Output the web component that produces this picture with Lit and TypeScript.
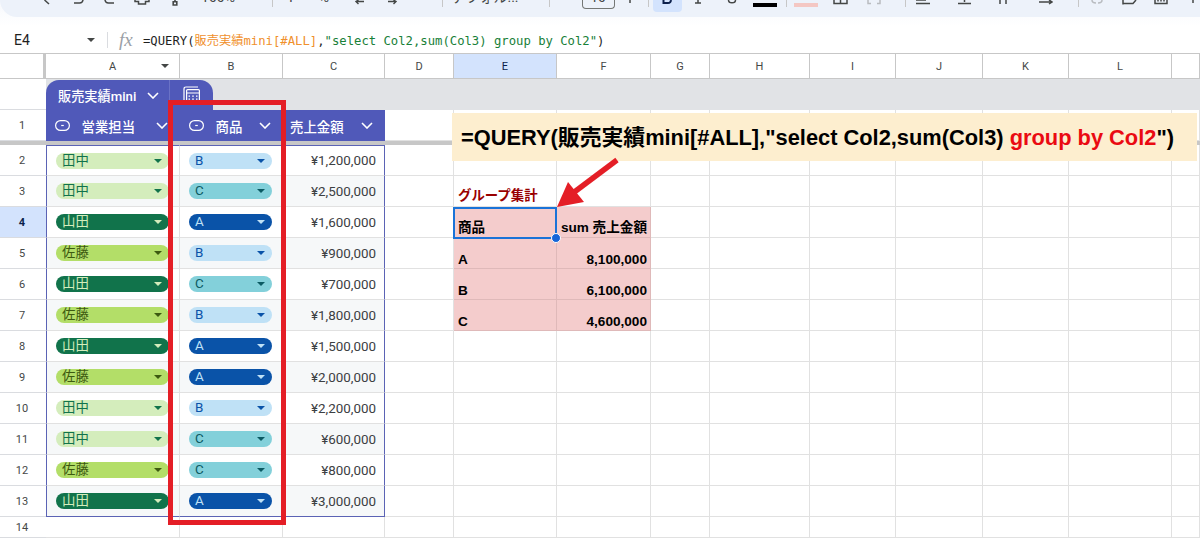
import { LitElement, html, svg, css, nothing } from 'lit';
import { customElement } from 'lit/decorators.js';

const COLS = [46, 134, 103, 102, 69, 103, 94, 59, 100, 86, 87, 86, 103, 28];
const LETTERS = ['A', 'B', 'C', 'D', 'E', 'F', 'G', 'H', 'I', 'J', 'K', 'L', ''];

const ROWS: [string, string, string][] = [
  ['田中', 'B', '¥1,200,000'],
  ['田中', 'C', '¥2,500,000'],
  ['山田', 'A', '¥1,600,000'],
  ['佐藤', 'B', '¥900,000'],
  ['山田', 'C', '¥700,000'],
  ['佐藤', 'B', '¥1,800,000'],
  ['山田', 'A', '¥1,500,000'],
  ['佐藤', 'A', '¥2,000,000'],
  ['田中', 'B', '¥2,200,000'],
  ['田中', 'C', '¥600,000'],
  ['佐藤', 'C', '¥800,000'],
  ['山田', 'A', '¥3,000,000'],
];

const PILL_CLASS: Record<string, string> = {
  田中: 'tanaka',
  山田: 'yamada',
  佐藤: 'sato',
  A: 'a',
  B: 'b',
  C: 'c',
};

// what is left of a toolbar icon below the crop line, so only the lower strokes
const tbIcon = (w: number, d: string, color = '#444746', sw = 1.5) =>
  html`<svg width=${w} height="17" viewBox="0 0 ${w} 17" fill="none" stroke=${color} stroke-width=${sw}>${svg`<path d=${d} />`}</svg>`;

const sep = html`<span class="tb-sep"></span>`;

const TOOLBAR: { c: number; w: number; t: unknown }[] = [
  { c: 47, w: 8, t: tbIcon(8, 'M1.5 0 6 4') },
  { c: 78, w: 11, t: tbIcon(11, 'M1 3H6.5A3.5 3.5 0 0 0 10 0') },
  { c: 109, w: 11, t: tbIcon(11, 'M10 3H4.5A3.5 3.5 0 0 1 1 0') },
  { c: 142, w: 16, t: tbIcon(16, 'M1 0V1.5H4.5V4H11.5V1.5H15V0') },
  { c: 175, w: 6, t: tbIcon(6, 'M3 0V1M1.2 1.8H4.8V5H1.2Z', '#444746', 1.6) },
  { c: 218, w: 40, t: html`<span class="tb-text">100%</span>` },
  { c: 272, w: 1, t: sep },
  { c: 291, w: 8, t: html`<span class="tb-text">¥</span>` },
  { c: 324, w: 12, t: html`<span class="tb-text">%</span>` },
  { c: 360, w: 10, t: tbIcon(10, 'M9 1.5H1.5M3.5 0 1 1.5 3.5 4', '#444746', 1.4) },
  { c: 392, w: 10, t: tbIcon(10, 'M1 1.5H8.5M6.5 0 9 1.5 6.5 4', '#444746', 1.4) },
  { c: 421, w: 20, t: html`<span class="tb-text small">123</span>` },
  { c: 442, w: 1, t: sep },
  { c: 485, w: 52, t: html`<span class="tb-text">デフォル...</span>` },
  { c: 549, w: 1, t: sep },
  { c: 598, w: 33, t: html`<span class="tb-box"><span class="tb-text">10</span></span>` },
  { c: 630, w: 8, t: tbIcon(8, 'M4 0V3') },
  { c: 648, w: 1, t: sep },
  { c: 667, w: 29, t: html`<span class="tb-bold">${tbIcon(12, 'M2.5 0V3H7C9 3 10 1.5 9.8 0', '#0b1f4b', 2)}</span>` },
  { c: 698, w: 8, t: tbIcon(8, 'M1 3H7M4 0V3') },
  { c: 732, w: 10, t: tbIcon(10, 'M1.5 0C1.5 3.8 8.5 3.8 8.5 0') },
  { c: 765, w: 24, t: html`<span class="tb-bar black"></span>` },
  { c: 786, w: 1, t: sep },
  { c: 806, w: 24, t: html`<span class="tb-bar pink"></span>` },
  { c: 840, w: 15, t: tbIcon(15, 'M1 0V3.6H14V0M7.5 0V3.6') },
  { c: 874, w: 14, t: tbIcon(14, 'M1 0V3.6H4M10 3.6H13V0', '#b9bcc0') },
  { c: 905, w: 1, t: sep },
  { c: 923, w: 14, t: tbIcon(14, 'M0 3.6H14M0 0H10', '#444746', 1.5) },
  { c: 964, w: 13, t: tbIcon(13, 'M0 3.6H13M6.5 0V2', '#444746', 1.5) },
  { c: 1003, w: 8, t: tbIcon(8, 'M1 0V4M7 0V4') },
  { c: 1046, w: 14, t: tbIcon(14, 'M0 2H12M10 0 13 2 10 4') },
  { c: 1078, w: 1, t: sep },
  { c: 1097, w: 12, t: tbIcon(12, 'M1 0C1 2.5 3 3 5 3M7 3C9 3 11 2.5 11 0', '#b9bcc0') },
  { c: 1129, w: 15, t: tbIcon(15, 'M1 4.5V0M1 3.4H11L14 0', '#444746') },
  { c: 1161, w: 14, t: tbIcon(14, 'M1 0V3.6H13V0M4 0V1.6M7 0V1.6M10 0V1.6') },
  { c: 1193, w: 6, t: tbIcon(6, 'M3 0V3') },
];

const chevron = html`<svg class="chev" width="12" height="7" viewBox="0 0 12 7" fill="none" stroke="#fff" stroke-width="1.6"><path d="M1 1l5 5 5-5" /></svg>`;
const pillIcon = html`<svg class="type" width="15" height="11" viewBox="0 0 15 11" fill="none" stroke="#fff" stroke-width="1.2"><rect x=".6" y=".6" width="13.8" height="9.8" rx="4.9" /><path d="M6.2 5.5h2.6" /></svg>`;
const tableIcon = html`<svg width="17" height="17" viewBox="0 0 17 17" fill="none" stroke="#fff" stroke-width="1.2"><path d="M1 16V3Q1 1 3 1H15" /><rect x="3.6" y="3.6" width="12.8" height="12.8" rx="1" /><path d="M3.6 7H16.4M5.5 10.2H7M9.2 10.2H10.8M13 10.2H14.5M5.5 13.2H7M9.2 13.2H10.8M13 13.2H14.5" /></svg>`;

@customElement('app-root')
export class AppRoot extends LitElement {
  static override styles = css`
    :host {
      display: block;
      width: 1200px;
      height: 540px;
      overflow: hidden;
      position: relative;
      background: #fff;
      font-family: Roboto, 'Noto Sans CJK JP', sans-serif;
      color: #1f1f1f;
    }

    .top {
      background: linear-gradient(#f6f8fc, #fff);
      height: 26px;
    }
    .toolbar {
      display: flex;
      height: 17px;
      overflow: hidden;
      background: #edf2fa;
      border-bottom-left-radius: 26px;
    }
    .toolbar > div {
      flex: none;
      height: 17px;
      display: flex;
      justify-content: center;
      align-items: flex-start;
    }
    .tb-sep {
      width: 1px;
      height: 7px;
      background: #c7c7c7;
    }
    .tb-text {
      font-size: 14px;
      line-height: 14px;
      margin-top: -10px;
      color: #444746;
      white-space: nowrap;
    }
    .tb-text.small {
      font-size: 11px;
      margin-top: -11px;
    }
    .tb-box {
      display: flex;
      justify-content: center;
      width: 33px;
      height: 9px;
      box-sizing: border-box;
      border: 1px solid #747775;
      border-top: 0;
      border-radius: 0 0 4px 4px;
    }
    .tb-bold {
      display: flex;
      justify-content: center;
      width: 29px;
      height: 12px;
      overflow: hidden;
      background: #d3e3fd;
      border-radius: 0 0 4px 4px;
    }
    .tb-bar {
      display: block;
      width: 24px;
      height: 4px;
      margin-top: 3px;
    }
    .tb-bar.black {
      background: #000;
    }
    .tb-bar.pink {
      background: #f4c7c3;
    }

    .formula {
      height: 28px;
      box-sizing: border-box;
      border-bottom: 1px solid #c7c7c7;
      display: flex;
      align-items: center;
    }
    .namebox {
      width: 107px;
      box-sizing: border-box;
      padding: 0 12px 0 14px;
      display: flex;
      justify-content: space-between;
      align-items: center;
      font-size: 14px;
      color: #1f1f1f;
    }
    .caret {
      width: 0;
      height: 0;
      border: 4px solid transparent;
      border-top: 4px solid #444746;
      border-bottom: 0;
    }
    .vsep {
      width: 1px;
      height: 16px;
      background: #dadce0;
    }
    .fx {
      width: 35px;
      padding-left: 11px;
      box-sizing: border-box;
      font: italic 19px 'Liberation Serif', serif;
      color: #9aa0a6;
    }
    .ftext {
      font: 12.24px 'DejaVu Sans Mono', 'Noto Sans CJK JP', monospace;
      white-space: pre;
      color: #1f1f1f;
    }
    .ftext .ref {
      color: #f0902c;
    }
    .ftext .str {
      color: #188038;
    }

    .sheet {
      display: grid;
      grid-auto-rows: 31px;
      font-size: 13.4px;
    }
    .cell {
      box-sizing: border-box;
      border-right: 1px solid #e1e1e1;
      border-bottom: 1px solid #e1e1e1;
      display: flex;
      align-items: center;
      min-width: 0;
    }
    .corner {
      border-right: 3px solid #c7c7c7;
      border-bottom: 1px solid #c7c7c7;
      background: #fff;
    }
    .colhead {
      justify-content: center;
      position: relative;
      font-size: 11px;
      color: #444746;
      border-right-color: #c7c7c7;
      border-bottom-color: #c7c7c7;
    }
    .colhead.sel {
      background: #d3e3fd;
      color: #0b1f4b;
    }
    .colhead .caret {
      position: absolute;
      right: 10px;
      top: 10px;
    }
    .rowhead {
      justify-content: center;
      padding-right: 2px;
      font-size: 11px;
      color: #444746;
      border-bottom-color: #dadce0;
      border-right: 0;
    }
    .rowhead.sel {
      background: #d3e3fd;
      color: #0b1f4b;
      font-weight: 700;
    }
    .band {
      grid-column: 2 / -1;
      background: #e1e3e6;
      border: 0;
      align-items: flex-end;
    }
    .tab {
      display: flex;
      align-items: center;
      height: 30px;
      width: 167px;
      box-sizing: border-box;
      background: #5059b9;
      color: #fff;
      border-radius: 13px 13px 0 0;
      font-size: 13.2px;
      font-weight: 500;
    }
    .tab-name {
      width: 124px;
      padding-left: 12px;
      box-sizing: border-box;
      display: flex;
      align-items: center;
      justify-content: space-between;
      padding-right: 10px;
      height: 100%;
      border-right: 1px solid #6a72c6;
      white-space: nowrap;
    }
    .tab-icon {
      padding-left: 13px;
      display: flex;
      margin-top: -1px;
    }
    .thead {
      background: #5059b9;
      color: #fff;
      border: 0;
      padding: 0 12px 0 9px;
      font-weight: 500;
      white-space: nowrap;
    }
    .thead .type {
      margin-right: 11.5px;
    }
    .thead .chev {
      margin-left: auto;
    }
    .thead.price {
      padding-left: 7px;
    }
    .freeze {
      grid-column: 1 / -1;
      background: #c7c7c7;
    }
    .body {
      padding: 0 10px 0 9px;
    }
    .body.tint {
      background: #f6f8f9;
    }
    .body.first {
      border-left: 1px solid #5b63b5;
    }
    .body.last {
      border-right: 1px solid #5b63b5;
      justify-content: flex-end;
      color: #3c4043;
      padding-right: 8px;
    }
    .body.top-edge {
      border-top: 1px solid #5b63b5;
    }
    .body.bottom-edge {
      border-bottom: 1px solid #5b63b5;
    }
    .pill {
      flex: 1;
      height: 16px;
      border-radius: 8px;
      display: flex;
      align-items: center;
      justify-content: space-between;
      padding: 0 7px 0 6px;
      box-sizing: border-box;
      line-height: 16px;
    }
    .pill i {
      width: 0;
      height: 0;
      border: 4px solid transparent;
      border-top: 4.5px solid currentColor;
      border-bottom: 0;
    }
    .tanaka {
      background: #d4edbc;
      color: #11734b;
    }
    .yamada {
      background: #11734b;
      color: #d4edbc;
    }
    .sato {
      background: #b3de68;
      color: #3d5a10;
    }
    .a {
      background: #0a53a8;
      color: #bfe1f6;
    }
    .b {
      background: #bfe1f6;
      color: #0a53a8;
    }
    .c {
      background: #83d0da;
      color: #0b5a63;
    }
    .group {
      background: #f4cccc;
      border-color: #dfb9b9;
      font: 700 13.6px 'Liberation Sans', 'Noto Sans CJK JP', sans-serif;
      color: #000;
      align-items: flex-end;
      padding: 0 3px 1px 4px;
      white-space: nowrap;
    }
    .group.num {
      justify-content: flex-end;
    }
    .caption {
      font: 700 13.4px 'Liberation Sans', 'Noto Sans CJK JP', sans-serif;
      color: #990000;
      align-items: flex-end;
      padding: 0 0 2px 4px;
      white-space: nowrap;
      overflow: visible;
    }

    .callout {
      position: absolute;
      left: 452px;
      top: 113px;
      width: 745px;
      height: 48px;
      box-sizing: border-box;
      background: #fdeecf;
      padding: 1px 0 0 9px;
      font: 700 21.84px/48px 'Liberation Sans', 'Noto Sans CJK JP', sans-serif;
      color: #000;
      white-space: pre;
    }
    .callout b {
      color: #ea0a12;
    }
    .redbox {
      position: absolute;
      left: 168px;
      top: 100px;
      width: 118px;
      height: 425px;
      box-sizing: border-box;
      border: 5px solid #e41e26;
      pointer-events: none;
    }
    .arrow {
      position: absolute;
      left: 550px;
      top: 155px;
      overflow: visible;
    }
    .selection {
      position: absolute;
      left: 453px;
      top: 207px;
      width: 104px;
      height: 32px;
      box-sizing: border-box;
      border: 2px solid #1a73d8;
    }
    .handle {
      position: absolute;
      right: -6px;
      bottom: -6px;
      width: 10px;
      height: 10px;
      box-sizing: border-box;
      background: #1565d8;
      border: 1px solid #fff;
      border-radius: 50%;
    }
  `;

  private renderToolbar() {
    let right = 0;
    return TOOLBAR.map((it) => {
      const left = it.c - it.w / 2;
      const ml = left - right;
      right = left + it.w;
      return html`<div style="width:${it.w}px;margin-left:${ml}px">${it.t}</div>`;
    });
  }

  private blankCells(from: number) {
    return COLS.slice(from).map(() => html`<div class="cell"></div>`);
  }

  private groupCells(rowNo: number) {
    const g: Record<number, [string, string]> = {
      4: ['商品', 'sum 売上金額'],
      5: ['A', '8,100,000'],
      6: ['B', '6,100,000'],
      7: ['C', '4,600,000'],
    };
    const row = g[rowNo];
    const d = html`<div class="cell"></div>`;
    if (row) {
      return html`${d}<div class="cell group">${row[0]}</div><div class="cell group num">${row[1]}</div>${this.blankCells(7)}`;
    }
    if (rowNo === 3) {
      return html`${d}<div class="cell caption">グループ集計</div>${this.blankCells(6)}`;
    }
    return html`${d}${this.blankCells(5)}`;
  }

  private renderBody() {
    return ROWS.map(([who, item, price], i) => {
      const rowNo = i + 2;
      const tint = i % 2 === 1 ? 'tint' : '';
      const top = i === 0 ? 'top-edge' : '';
      const bottom = i === ROWS.length - 1 ? 'bottom-edge' : '';
      return html`
        <div class="cell rowhead ${rowNo === 4 ? 'sel' : ''}">${rowNo}</div>
        <div class="cell body first ${tint} ${top} ${bottom}">
          <span class="pill ${PILL_CLASS[who]}">${who}<i></i></span>
        </div>
        <div class="cell body ${tint} ${top} ${bottom}">
          <span class="pill ${PILL_CLASS[item]}">${item}<i></i></span>
        </div>
        <div class="cell body last ${tint} ${top} ${bottom}">${price}</div>
        ${this.groupCells(rowNo)}
      `;
    });
  }

  override render() {
    const template = COLS.map((w) => `${w}px`).join(' ');
    const rowsCss = `grid-template-columns:${template};grid-template-rows:25px 31px 31px 4px repeat(12,31px) 21px`;
    return html`
      <div class="top">
        <div class="toolbar">${this.renderToolbar()}</div>
      </div>
      <div class="formula">
        <div class="namebox">E4<span class="caret"></span></div>
        <span class="vsep"></span>
        <span class="fx">fx</span>
        <span class="ftext">=QUERY(<span class="ref">販売実績mini[#ALL]</span>,<span class="str">"select Col2,sum(Col3) group by Col2"</span>)</span>
      </div>
      <div class="sheet" style=${rowsCss}>
        <div class="corner"></div>
        ${LETTERS.map(
          (l, i) => html`<div class="cell colhead ${l === 'E' ? 'sel' : ''}">
            ${l}${i === 0 ? html`<span class="caret"></span>` : nothing}
          </div>`
        )}

        <div class="cell rowhead"></div>
        <div class="cell band">
          <div class="tab">
            <div class="tab-name">販売実績mini ${chevron}</div>
            <div class="tab-icon">${tableIcon}</div>
          </div>
        </div>

        <div class="cell rowhead">1</div>
        <div class="cell thead">${pillIcon}営業担当${chevron}</div>
        <div class="cell thead">${pillIcon}商品${chevron}</div>
        <div class="cell thead price">売上金額${chevron}</div>
        ${this.blankCells(4)}

        <div class="freeze"></div>

        ${this.renderBody()}

        <div class="cell rowhead">14</div>
        ${this.blankCells(1)}
      </div>

      <div class="callout">=QUERY(販売実績mini[#ALL],"select Col2,sum(Col3) <b>group by Col2</b>")</div>
      <div class="selection"><span class="handle"></span></div>
      <svg class="arrow" width="70" height="56" viewBox="550 155 70 56">
        <path d="M617 160 573 193" stroke="#e41e26" stroke-width="5.5" fill="none" />
        <path d="M557 207 568 182 584 202Z" fill="#e41e26" />
      </svg>
      <div class="redbox"></div>
    `;
  }
}
